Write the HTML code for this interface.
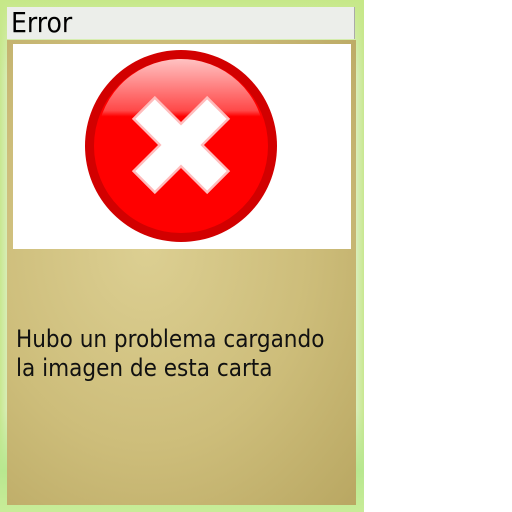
<!DOCTYPE html>
<html><head><meta charset="utf-8"><style>
html,body{margin:0;padding:0;width:512px;height:512px;background:#fff;overflow:hidden}
.frame{position:absolute;left:0;top:0;width:364px;height:512px;
background:linear-gradient(90deg,#c8e890 0,#e0f0cc 3%,#f0f6e8 50%,#e0f0cc 97%,#c8e890 100%);}
.frame2{position:absolute;left:0;top:0;width:364px;height:512px;
background:linear-gradient(180deg,#c6e888 0,rgba(220,240,200,0) 15%,rgba(220,240,200,0) 80%,#b8e890 92%,#c8ec98 100%);}
.card{position:absolute;left:7px;top:40px;width:349px;height:465px;
background:radial-gradient(ellipse at 40% 45%,#dccf92 0,#cdbd7a 55%,#b9a762 100%);}
.title{position:absolute;left:7px;top:7px;width:348px;height:32px;background:#eceeea;border-right:1px solid #aaa;
font-family:"DejaVu Sans Condensed","DejaVu Sans",sans-serif;font-size:28px;line-height:32px;color:#000;box-sizing:border-box;padding-left:4px}
.img{position:absolute;left:13px;top:44px;width:338px;height:205px;background:#fff}
.txt{position:absolute;left:16px;top:325px;font-family:"DejaVu Sans Condensed","DejaVu Sans",sans-serif;font-size:24px;line-height:29px;color:#111}
</style></head><body>
<div class="frame"></div><div class="frame2"></div>
<div class="card"></div>
<div class="title">Error</div>
<div class="img">
<svg width="338" height="205" viewBox="0 0 338 205">
<defs>
<linearGradient id="g" x1="0" y1="0" x2="0" y2="1">
<stop offset="0" stop-color="#ffd8d8"/><stop offset="0.45" stop-color="#ff5050"/><stop offset="0.5" stop-color="#ff0000"/><stop offset="1" stop-color="#ff0000"/></linearGradient>
</defs>
<circle cx="168" cy="102" r="96" fill="#d20000"/>
<circle cx="168" cy="102" r="87" fill="#ff0000"/>
<path d="M84 102 A84 84 0 0 1 252 96 Q200 60 140 80 Q100 95 88 130 Z" fill="url(#g)" opacity="0.9"/>
<g transform="translate(168,101) rotate(45)">
<path d="M-15 -52 H15 V-15 H52 V15 H15 V52 H-15 V15 H-52 V-15 H-15 Z" fill="#fff" stroke="#ffbcbc" stroke-width="2.5" stroke-linejoin="miter"/>
</g>
</svg>
</div>
<div class="txt">Hubo un problema cargando<br>la imagen de esta carta</div>
</body></html>
